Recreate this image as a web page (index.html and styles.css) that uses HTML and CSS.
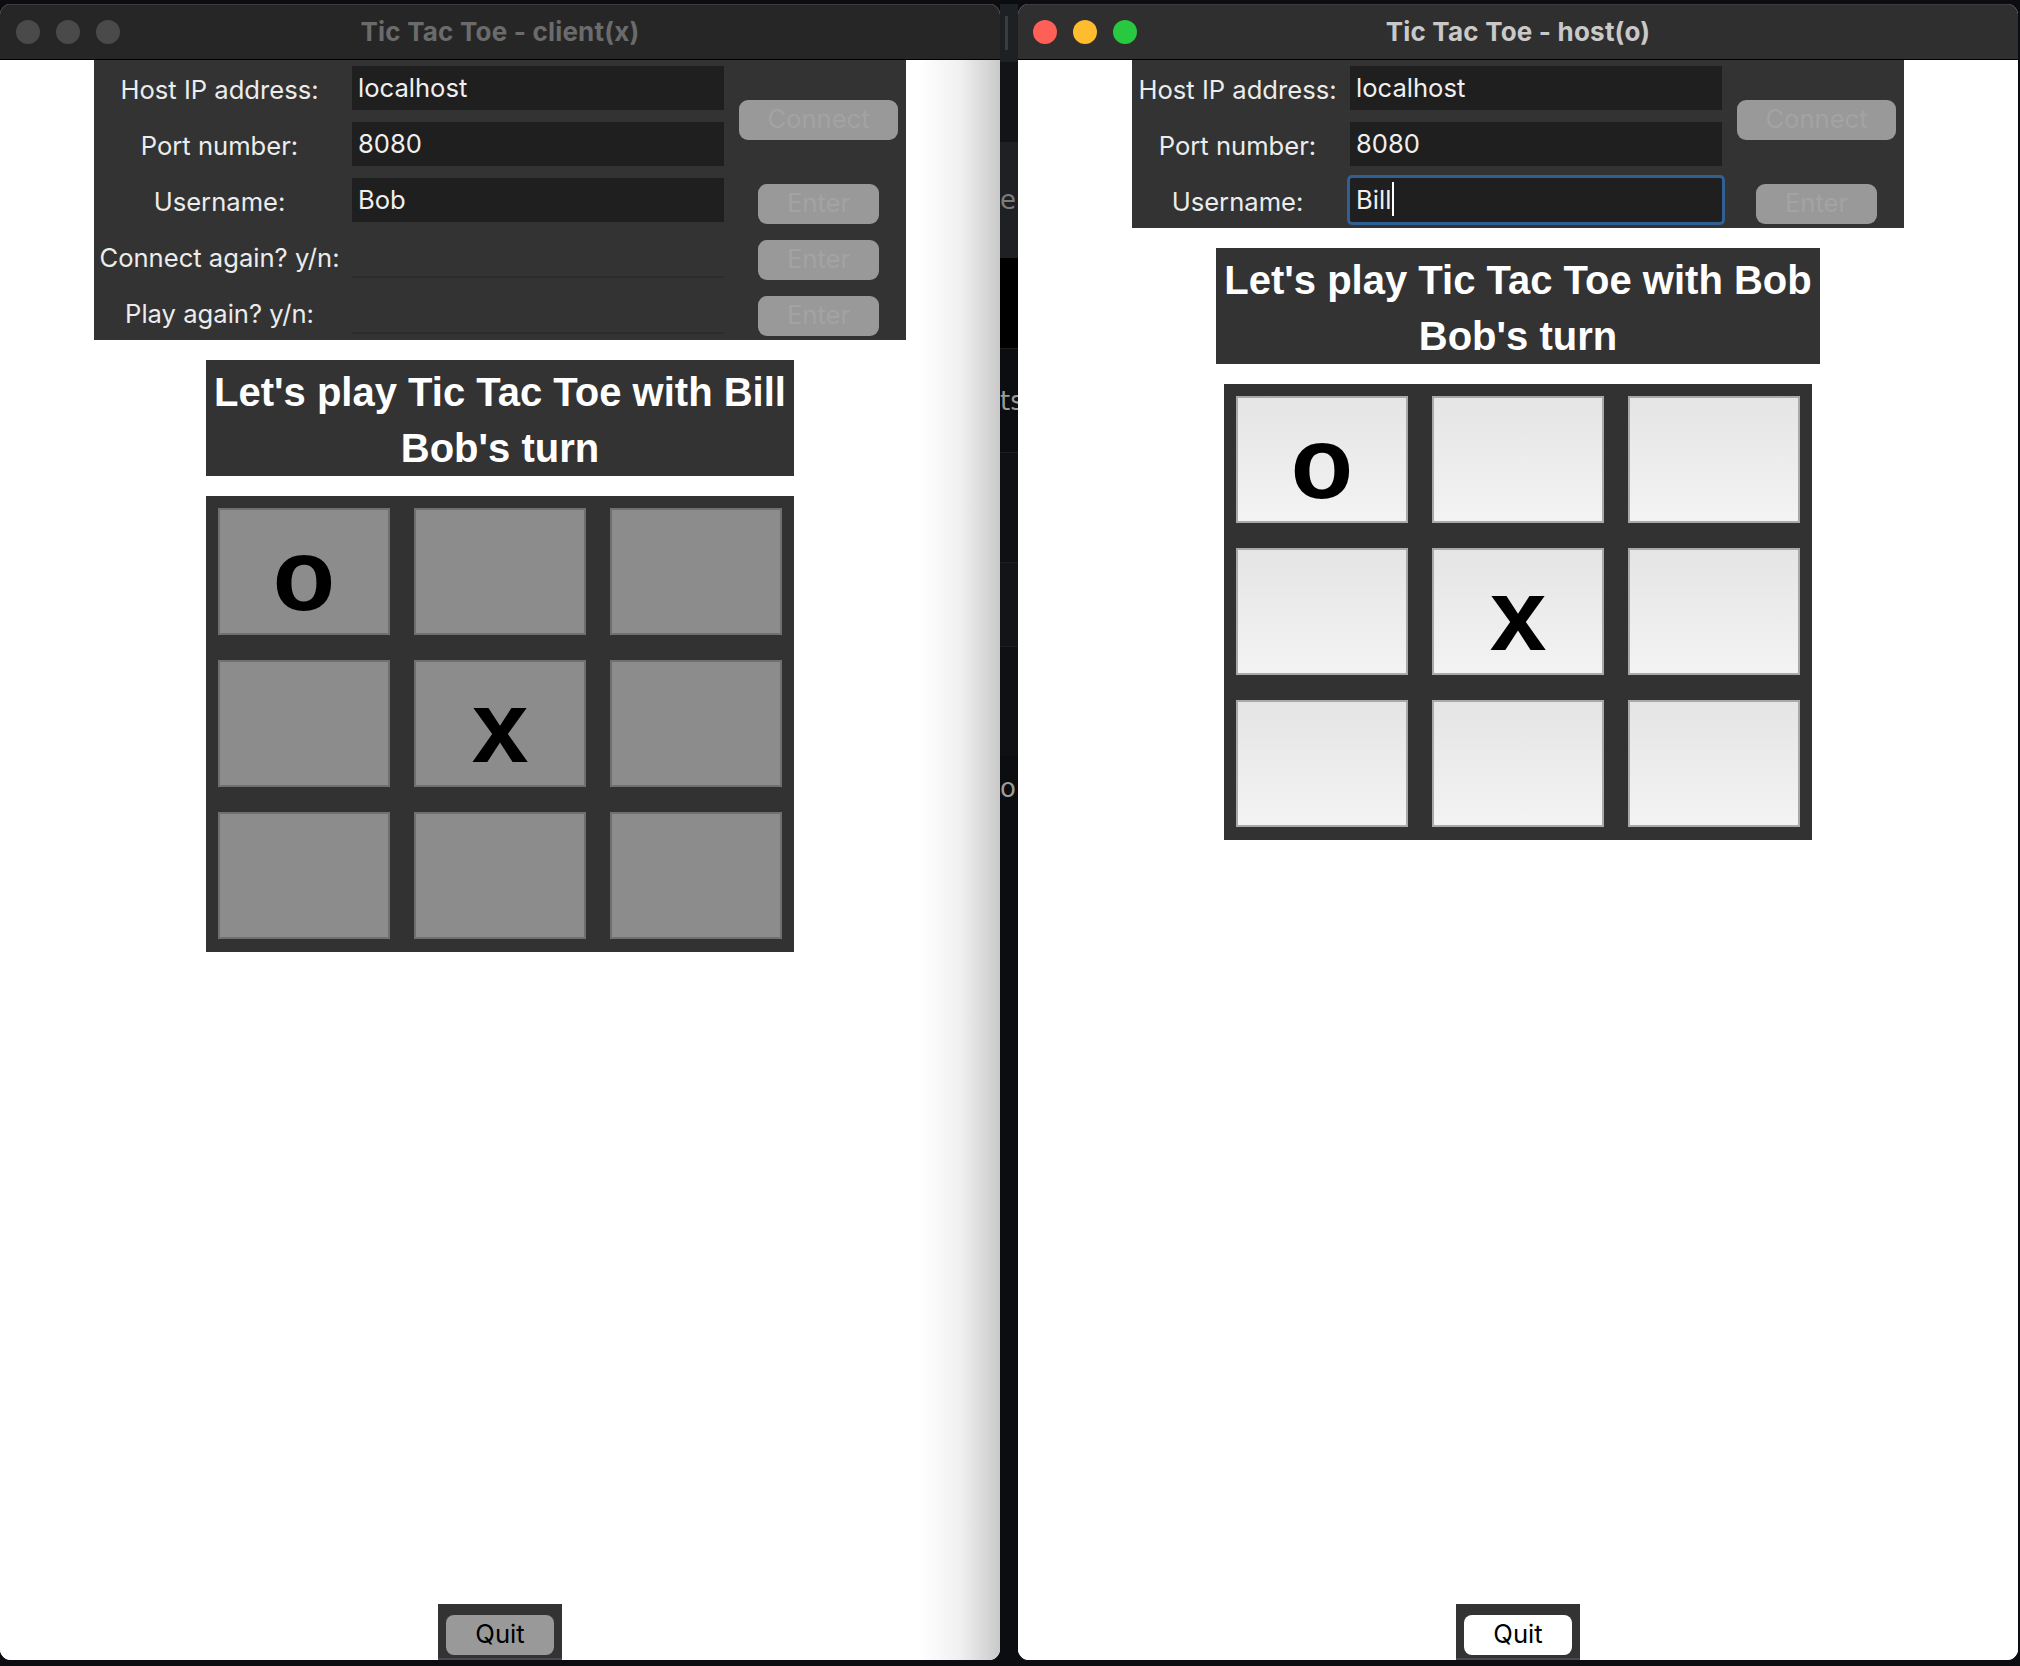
FILE: index.html
```html
<!DOCTYPE html>
<html lang="en">
<head>
<meta charset="utf-8">
<title>Tic Tac Toe</title>
<link rel="stylesheet" href="styles.css">
</head>
<body>
<div class="desktop">
  <section class="window window--inactive">
    <header class="titlebar">
      <div class="lights"><span class="light"></span><span class="light"></span><span class="light"></span></div>
      <div class="title">Tic Tac Toe - client(x)</div>
      <div></div>
    </header>
    <main class="content content--shaded">
      <div class="panel panel--client">
        <div class="field-label">Host IP address:</div>
        <div class="entry-cell"><div class="entry">localhost</div></div>
        <div class="btn-cell btn-cell--connect"><span class="tk-btn tk-btn--connect">Connect</span></div>
        <div class="field-label">Port number:</div>
        <div class="entry-cell"><div class="entry">8080</div></div>
        <div class="field-label">Username:</div>
        <div class="entry-cell"><div class="entry">Bob</div></div>
        <div class="btn-cell"><span class="tk-btn">Enter</span></div>
        <div class="field-label">Connect again? y/n:</div>
        <div class="entry-cell"><div class="entry entry--disabled"></div></div>
        <div class="btn-cell"><span class="tk-btn">Enter</span></div>
        <div class="field-label">Play again? y/n:</div>
        <div class="entry-cell"><div class="entry entry--disabled"></div></div>
        <div class="btn-cell"><span class="tk-btn">Enter</span></div>
      </div>
      <div class="banner">Let's play Tic Tac Toe with Bill<br>Bob's turn</div>
      <div class="board board--disabled">
        <div class="cell">o</div><div class="cell"></div><div class="cell"></div>
        <div class="cell"></div><div class="cell">x</div><div class="cell"></div>
        <div class="cell"></div><div class="cell"></div><div class="cell"></div>
      </div>
      <div class="quit-frame"><span class="quit quit--disabled">Quit</span></div>
    </main>
  </section>

  <div class="strip">
    <div class="strip-top"><span class="strip-bar"></span></div>
    <div class="strip-band"></div>
    <div class="strip-row strip-row--light">e.</div>
    <div class="strip-black"></div>
    <div class="strip-row strip-row--text">ts</div>
    <div class="strip-row strip-row--dark"></div>
    <div class="strip-row strip-row--mid"></div>
    <div class="strip-row strip-row--dark"></div>
    <div class="strip-row strip-row--text strip-row--short">o</div>
    <div class="strip-rest"></div>
  </div>

  <section class="window window--active">
    <header class="titlebar">
      <div class="lights"><span class="light light--red"></span><span class="light light--yellow"></span><span class="light light--green"></span></div>
      <div class="title">Tic Tac Toe - host(o)</div>
      <div></div>
    </header>
    <main class="content">
      <div class="panel panel--host">
        <div class="field-label">Host IP address:</div>
        <div class="entry-cell"><div class="entry">localhost</div></div>
        <div class="btn-cell btn-cell--connect"><span class="tk-btn tk-btn--connect">Connect</span></div>
        <div class="field-label">Port number:</div>
        <div class="entry-cell"><div class="entry">8080</div></div>
        <div class="field-label">Username:</div>
        <div class="entry-cell"><div class="entry entry--focus">Bill<span class="caret"></span></div></div>
        <div class="btn-cell"><span class="tk-btn">Enter</span></div>
      </div>
      <div class="banner">Let's play Tic Tac Toe with Bob<br>Bob's turn</div>
      <div class="board board--active">
        <div class="cell">o</div><div class="cell"></div><div class="cell"></div>
        <div class="cell"></div><div class="cell">x</div><div class="cell"></div>
        <div class="cell"></div><div class="cell"></div><div class="cell"></div>
      </div>
      <div class="quit-frame"><span class="quit">Quit</span></div>
    </main>
  </section>
</div>
</body>
</html>
```
FILE: styles.css
```css
html, body {
  margin: 0;
  padding: 0;
}
body {
  background: #0b0d10;
  font-family: "Inter", "Noto Sans", "Liberation Sans", sans-serif;
  width: 2020px;
  height: 1666px;
  overflow: hidden;
}
.desktop {
  display: flex;
  align-items: flex-start;
  padding-top: 4px;
}
.window {
  flex: none;
  width: 1000px;
  height: 1656px;
  border-radius: 11px;
  overflow: hidden;
  display: flex;
  flex-direction: column;
  background: #fff;
}
.titlebar {
  flex: none;
  height: 56px;
  box-sizing: border-box;
  border-top: 1px solid #3c3c3c;
  border-bottom: 1px solid #000;
  display: grid;
  grid-template-columns: 1fr auto 1fr;
  align-items: center;
}
.window--inactive .titlebar {
  background: #262626;
}
.window--active .titlebar {
  background: #2f2f2f;
}
.lights {
  display: flex;
  gap: 16px;
  padding-left: 16px;
}
.window--active .lights {
  padding-left: 15px;
}
.light {
  width: 24px;
  height: 24px;
  border-radius: 50%;
  background: #4a4a4a;
}
.light--red { background: #fe5f57; }
.light--yellow { background: #febc2e; }
.light--green { background: #28c840; }
.title {
  font-weight: 700;
  font-size: 26px;
  letter-spacing: 0.2px;
  padding-bottom: 2px;
}
.window--inactive .title { color: #6b6b6b; }
.window--active .title { color: #c9c9c9; }

.content {
  flex: 1;
  display: flex;
  flex-direction: column;
  align-items: center;
  background: #fff;
}
.content--shaded {
  background: linear-gradient(to right, #fff 0, #fff calc(100% - 80px), #f0f0f0 calc(100% - 40px), #c9c9c9 100%);
}

/* form panel */
.panel {
  display: grid;
  grid-auto-rows: 56px;
  background: #333333;
  color: #ececec;
  font-size: 25.6px;
}
.panel--client {
  grid-template-columns: 251px 386px 175px;
}
.panel--host {
  grid-template-columns: 211px 386px 175px;
}
.field-label {
  display: flex;
  align-items: center;
  justify-content: center;
  padding-top: 3px;
  white-space: nowrap;
}
.entry-cell {
  padding: 6px 7px;
}
.entry {
  height: 44px;
  box-sizing: border-box;
  background: #1f1f1f;
  padding: 0 6px 2px;
  display: flex;
  align-items: center;
  color: #f0f0f0;
}
.entry--disabled {
  background: #333333;
  border-bottom: 2px solid #2b2b2b;
}
.entry--focus {
  box-shadow: 0 0 0 3px #2f5f93;
  border-radius: 2px;
}
.caret {
  width: 2px;
  height: 34px;
  background: #fff;
  margin-left: 1px;
}
.btn-cell {
  display: flex;
  justify-content: center;
  align-items: flex-start;
  padding-top: 12px;
}
.btn-cell--connect {
  grid-row: span 2;
  padding-top: 40px;
}
.tk-btn {
  width: 121px;
  height: 40px;
  box-sizing: border-box;
  padding-bottom: 4px;
  border-radius: 9px;
  background: #999999;
  color: #a3a3a3;
  display: flex;
  align-items: center;
  justify-content: center;
  font-size: 25.6px;
}
.tk-btn--connect {
  width: 159px;
}

/* banner */
.banner {
  margin-top: 20px;
  background: #333333;
  color: #fff;
  font-family: "Liberation Sans", Arial, sans-serif;
  font-weight: 700;
  font-size: 40px;
  line-height: 56px;
  padding: 4px 8px 0;
  text-align: center;
  white-space: nowrap;
}

/* board */
.board {
  margin-top: 20px;
  width: 588px;
  height: 456px;
  box-sizing: border-box;
  background: #323232;
  padding: 12px 12px 13px 12px;
  display: grid;
  grid-template-columns: repeat(3, 172px);
  grid-template-rows: repeat(3, 127px);
  column-gap: 24px;
  row-gap: 25px;
}
.cell {
  box-sizing: border-box;
  border: 2px solid #6f6f6f;
  background: #8c8c8c;
  font-family: "Liberation Sans", Arial, sans-serif;
  font-weight: 700;
  font-size: 102px;
  line-height: 102px;
  padding-top: 14px;
  text-align: center;
  color: #000;
  overflow: hidden;
}
.board--active .cell {
  border-color: #a9a9a9;
  background: linear-gradient(#e5e5e5, #f3f3f3);
}

/* quit */
.quit-frame {
  margin-top: auto;
  width: 124px;
  height: 56px;
  box-sizing: border-box;
  background: #333333;
  border-bottom: 2px solid #4a4a4a;
  padding: 11px 8px 0;
}
.quit {
  height: 40px;
  box-sizing: border-box;
  padding-bottom: 4px;
  border-radius: 8px;
  background: #ffffff;
  color: #000;
  display: flex;
  align-items: center;
  justify-content: center;
  font-size: 25.6px;
}
.quit--disabled {
  background: #999999;
}

/* strip between windows (background window fragments) */
.strip {
  flex: none;
  width: 18px;
  height: 1666px;
  margin-top: -4px;
  overflow: hidden;
  display: flex;
  flex-direction: column;
  color: #8d8d8d;
  font-family: "DejaVu Sans", sans-serif;
  font-size: 26px;
  white-space: nowrap;
}
.strip-top {
  flex: none;
  height: 62px;
  background: #1e2124;
  display: flex;
  align-items: center;
  padding-left: 5px;
  border-top: 4px solid #0b0d10;
  box-sizing: border-box;
}
.strip-bar {
  width: 3px;
  height: 34px;
  background: #3a3d40;
}
.strip-band {
  flex: none;
  height: 80px;
  background: #121417;
}
.strip-row {
  flex: none;
  overflow: hidden;
  display: flex;
  align-items: center;
  box-sizing: border-box;
}
.strip-row--light {
  height: 116px;
  background: #1e2023;
  color: #7c7c7c;
}
.strip-black {
  flex: none;
  height: 90px;
  background: #000;
}
.strip-row--text {
  height: 104px;
  background: #0b0d10;
  border-top: 1px solid #1c1e21;
  color: #9a9a9a;
}
.strip-row--dark {
  height: 110px;
  background: #0e1013;
  border-top: 1px solid #1c1e21;
}
.strip-row--mid {
  height: 84px;
  background: #121417;
  border-top: 1px solid #1c1e21;
}
.strip-row--short {
  height: 64px;
  border-top: 0;
}
.strip-rest {
  flex: 1;
  background: #0b0d10;
}
```
